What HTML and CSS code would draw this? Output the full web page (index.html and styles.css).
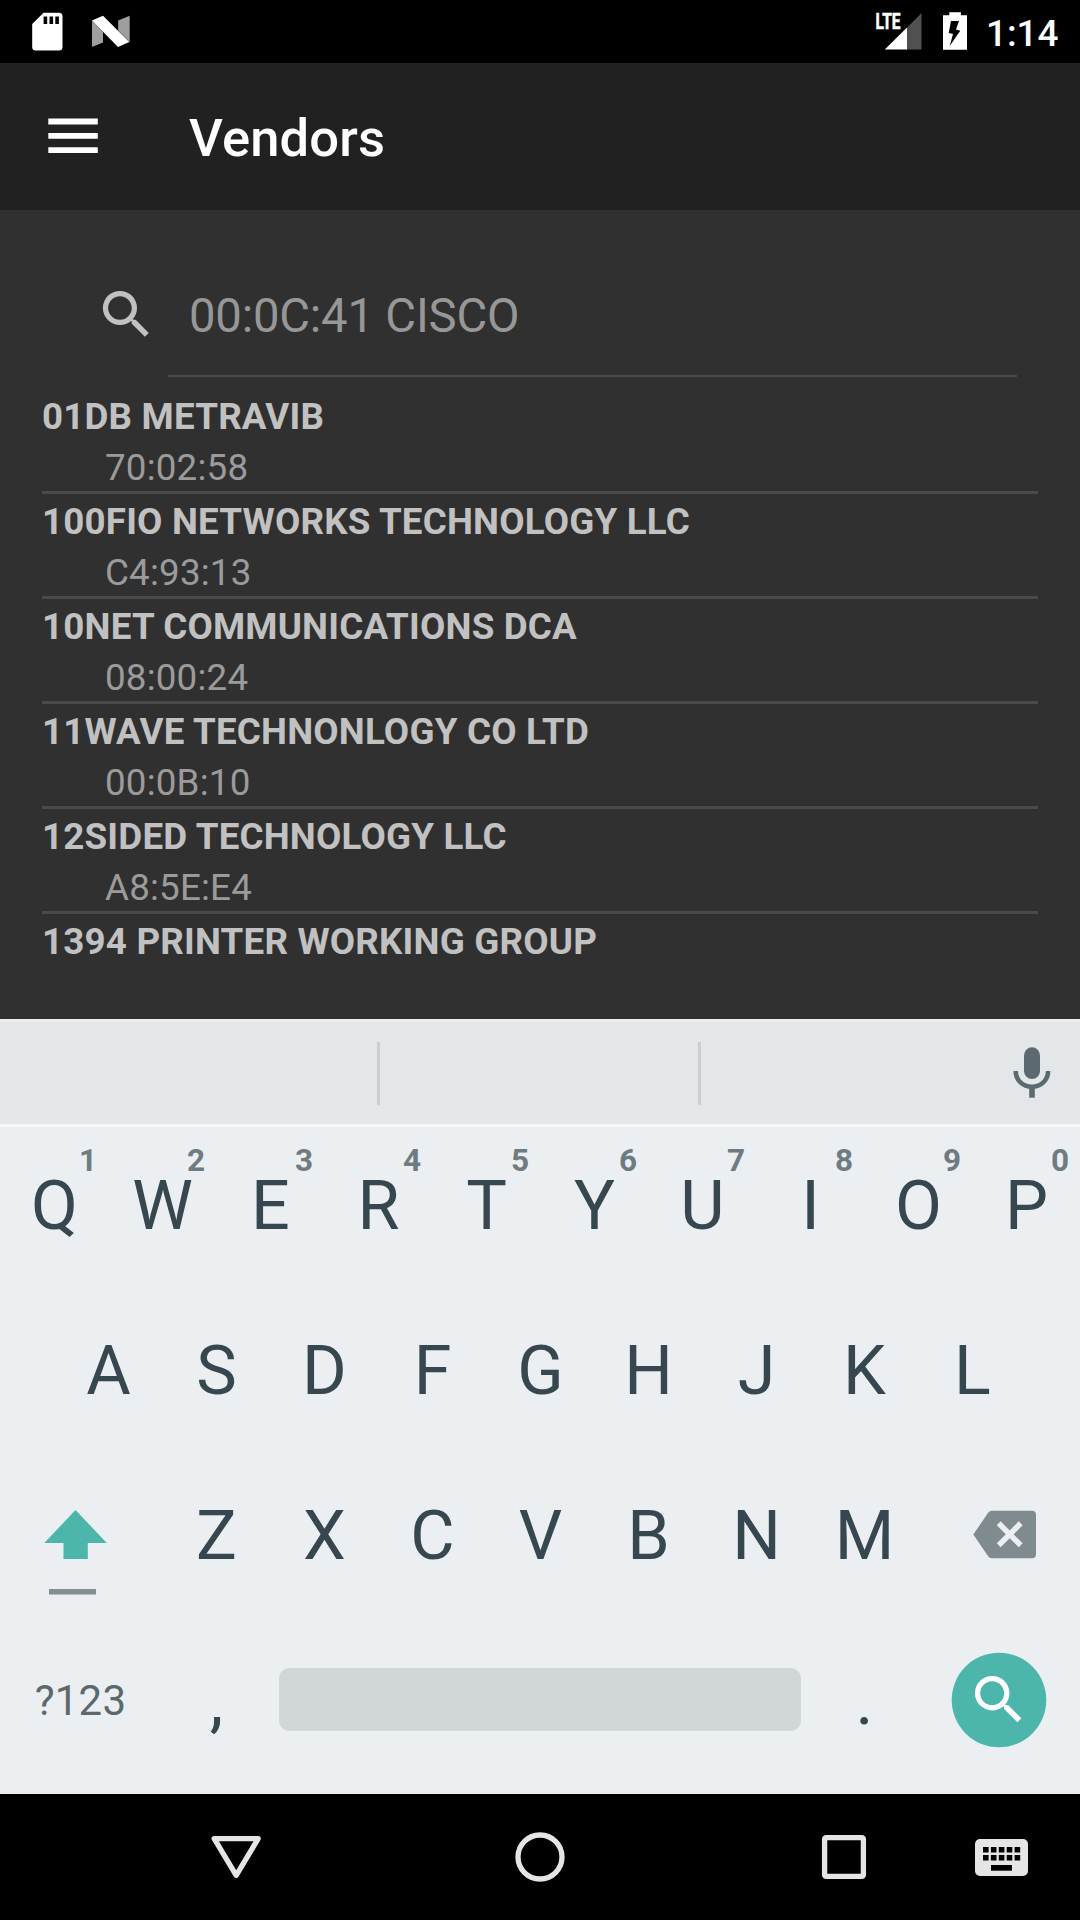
FILE: index.html
```html
<!DOCTYPE html>
<html lang="en">
<head>
<meta charset="utf-8">
<title>Vendors</title>
<link rel="stylesheet" href="styles.css">
</head>
<body>
<div class="screen">
  <header class="status">
    <svg width="140" height="63" viewBox="0 0 140 63">
      <path fill="#fff" fill-rule="evenodd" d="M43.5 12.7H59a3.5 3.5 0 0 1 3.5 3.5V47a3.5 3.5 0 0 1-3.5 3.5H35.700a3.500 3.500 0 0 1-3.500-3.500V24zM43.600 16.500v7.500h3.600v-7.500zM49.500 16.500v7.500h3.600v-7.500zM55.300 16.500v7.500h3.600v-7.500z"/>
      <path fill="#9e9e9e" d="M92 20.500l11 11.500v10.500L92 47zM118.200 20.400l11.500-4.600V42l-11.500-11.500z"/>
      <path fill="#fff" d="M92 20.500l11-4.800L129.300 42 118 47z"/>
    </svg>
    <div class="status-right">
      <svg width="110" height="63" viewBox="870 0 110 63">
        <text class="lte" x="875.500" y="29" textLength="25" lengthAdjust="spacingAndGlyphs">LTE</text>
        <path fill="#505050" d="M907 27.700L921.500 13v36.500H907z"/>
        <path fill="#fff" d="M884.800 49.500L907 27.500v22z"/>
        <path fill="#fff" fill-rule="evenodd" d="M949.300 12.300h11.600v3H967v34.500h-24V15.300h6.300zM951 21l-2.300 12 4.300 1-3.300 12L960.300 30.700l-4.300-1.300L959 21z"/>
      </svg>
      <span class="clock">1:14</span>
    </div>
  </header>

  <div class="appbar">
    <svg width="50" height="36" viewBox="0 0 50 36" fill="#fff">
      <path d="M.3.500h49.500v6H.3zM.3 15h49.500v5.700H.3zM.3 29.200h49.500v5.800H.3z"/>
    </svg>
    <h1 class="title">Vendors</h1>
  </div>

  <main class="content">
    <div class="search">
      <svg class="search-icon" width="63" height="63" viewBox="0 0 24 24" fill="#c1c1c1">
        <path d="M15.500 14h-.790l-.280-.270A6.471 6.471 0 0 0 16 9.500 6.500 6.500 0 1 0 9.500 16c1.610 0 3.090-.590 4.230-1.570l.270.280v.790l5 4.990L20.490 19l-4.990-5zm-6 0C7.010 14 5 11.990 5 9.500S7.010 5 9.500 5 14 7.010 14 9.500 11.990 14 9.500 14z"/>
      </svg>
      <div class="field">00:0C:41 CISCO</div>
    </div>
    <ul class="list">
      <li class="row"><b class="name">01DB METRAVIB</b><span class="mac">70:02:58</span></li>
      <li class="row"><b class="name">100FIO NETWORKS TECHNOLOGY LLC</b><span class="mac">C4:93:13</span></li>
      <li class="row"><b class="name">10NET COMMUNICATIONS DCA</b><span class="mac">08:00:24</span></li>
      <li class="row"><b class="name">11WAVE TECHNONLOGY CO LTD</b><span class="mac">00:0B:10</span></li>
      <li class="row"><b class="name">12SIDED TECHNOLOGY LLC</b><span class="mac">A8:5E:E4</span></li>
      <li class="row"><b class="name">1394 PRINTER WORKING GROUP</b></li>
    </ul>
  </main>

  <section class="keyboard">
    <div class="suggest">
      <div class="slot slot-first"></div>
      <div class="slot slot-mid"></div>
      <svg class="mic" width="38" height="52" viewBox="1013 1047 38 52">
        <rect x="1024" y="1047.300" width="16" height="31.700" rx="8" fill="#5c6a70"/>
        <path d="M1015.700 1071c0 9.300 7.300 15.800 16.200 15.800s16.200-6.500 16.200-15.800" fill="none" stroke="#5c6a70" stroke-width="4.600"/>
        <path d="M1029.200 1087h5.600v10.700h-5.600z" fill="#5c6a70"/>
      </svg>
    </div>
    <div class="keys">
      <div class="key">Q<sup class="hint">1</sup></div>
      <div class="key">W<sup class="hint">2</sup></div>
      <div class="key">E<sup class="hint">3</sup></div>
      <div class="key">R<sup class="hint">4</sup></div>
      <div class="key">T<sup class="hint">5</sup></div>
      <div class="key">Y<sup class="hint">6</sup></div>
      <div class="key">U<sup class="hint">7</sup></div>
      <div class="key">I<sup class="hint">8</sup></div>
      <div class="key">O<sup class="hint">9</sup></div>
      <div class="key">P<sup class="hint">0</sup></div>
    </div>
    <div class="keys">
      <div class="key">A</div>
      <div class="key">S</div>
      <div class="key">D</div>
      <div class="key">F</div>
      <div class="key">G</div>
      <div class="key">H</div>
      <div class="key">J</div>
      <div class="key">K</div>
      <div class="key">L</div>
    </div>
    <div class="keys">
      <svg width="162" height="165" viewBox="0 0 162 165">
        <path fill="#4db6ac" d="M75.500 53l31.300 33H87.800v16H63.500V86H44.300z"/>
        <path fill="#838d92" d="M49 132h47v5.500H49z"/>
      </svg>
      <div class="key">Z</div>
      <div class="key">X</div>
      <div class="key">C</div>
      <div class="key">V</div>
      <div class="key">B</div>
      <div class="key">N</div>
      <div class="key">M</div>
      <svg width="162" height="165" viewBox="0 0 162 165">
        <path fill="#808b90" d="M73.500 53.800H114a4 4 0 0 1 4 4v39.500a4 4 0 0 1-4 4H73.500q-2 0-3.200-1.800L55.300 77.500 70.300 55.600q1.200-1.800 3.200-1.800z"/>
        <path stroke="#eceff1" stroke-width="5.500" d="M80.700 66.300l22 22M102.700 66.300l-22 22"/>
      </svg>
    </div>
    <div class="keys">
      <div class="sym">?123</div>
      <div class="key">,</div>
      <div class="space-cell"><div class="space"></div></div>
      <div class="key">.</div>
      <svg width="162" height="165" viewBox="0 0 162 165">
        <circle cx="81" cy="78" r="47.300" fill="#4db6ac"/>
        <path transform="translate(49 46) scale(2.650)" fill="#fff" d="M15.500 14h-.790l-.280-.270A6.471 6.471 0 0 0 16 9.500 6.500 6.500 0 1 0 9.500 16c1.610 0 3.090-.590 4.230-1.570l.270.280v.790l5 4.990L20.490 19l-4.990-5zm-6 0C7.010 14 5 11.990 5 9.500S7.010 5 9.500 5 14 7.010 14 9.500 11.990 14 9.500 14z"/>
      </svg>
    </div>
  </section>

  <nav class="navbar">
    <svg width="1080" height="126" viewBox="0 1794 1080 126">
      <g fill="none" stroke="#e5e5e5" stroke-width="5.300" stroke-linejoin="round">
        <path d="M214.200 1838.600h44L236.200 1875.300z"/>
        <circle cx="540" cy="1857" r="22"/>
        <rect x="824.600" y="1837.600" width="38.800" height="38.800" rx="1.500"/>
      </g>
      <rect x="975" y="1839" width="53" height="37" rx="5" fill="#e5e5e5"/>
      <path stroke="#000" stroke-width="5.500" stroke-dasharray="5.600 2.300" d="M983 1849.700h38M983 1857.700h38"/>
      <path fill="#000" d="M991 1865h21v5.700h-21z"/>
    </svg>
  </nav>
</div>
</body>
</html>
```
FILE: styles.css
```css
* { box-sizing: border-box; }

body {
  margin: 0;
  background: #000;
  font-family: Roboto, "Liberation Sans", sans-serif;
}

.screen {
  display: flex;
  flex-direction: column;
  width: 1080px;
  height: 1920px;
  overflow: hidden;
  background: #303030;
}

svg { display: block; flex: none; }

.status {
  display: flex;
  justify-content: space-between;
  height: 63px;
  background: #000;
  color: #fff;
}

.status-right { display: flex; padding-right: 20px; }

.lte {
  font-size: 21.800px;
  font-weight: 700;
  fill: #fff;
  stroke: #fff;
  stroke-width: .6px;
}

.clock {
  width: 80px;
  padding-left: 6px;
  font-size: 36.750px;
  font-weight: 500;
  line-height: 43px;
  padding-top: 12px;
}

.appbar {
  display: flex;
  height: 147px;
  padding: 55px 48px 0;
  background: #212121;
}

.title {
  margin: -11px 0 0 91px;
  color: #fff;
  font-size: 52.500px;
  font-weight: 500;
  line-height: 62px;
  letter-spacing: .15px;
}

.content {
  display: flex;
  flex-direction: column;
  height: 809px;
  padding: 52px 42px 0;
  overflow: hidden;
}

.search {
  display: flex;
  height: 115px;
  padding: 0 21px 0 53px;
}

.search-icon { margin-top: 21px; }

.field {
  flex: 1;
  margin-left: 10px;
  padding: 26px 0 0 21px;
  border-bottom: 2px solid #4a4a4a;
  color: #979797;
  font-size: 47.250px;
  line-height: 56px;
  letter-spacing: -.2px;
}

.list {
  margin: 0;
  padding: 12px 0 0;
  list-style: none;
}

.row {
  display: flex;
  flex-direction: column;
  height: 105px;
  padding-top: 2px;
  border-bottom: 3px solid #4a4a4a;
  font-size: 36.750px;
  line-height: 51px;
  letter-spacing: .19px;
}

.row:last-child { border-bottom: 0; }

.name { color: #c1c1c1; font-weight: 700; }

.mac { padding-left: 63px; color: #9b9b9b; }

.keyboard {
  height: 775px;
  background: #eceff1;
}

.suggest {
  display: flex;
  height: 108px;
  padding: 20px 29px 0 0;
  border-top: 3px solid #eceff1;
  border-bottom: 3px solid #f5f7f8;
  background: #e3e7e9;
}

.slot { height: 63px; border-right: 3px solid #cbcfd1; }
.slot-first { width: 380px; }
.slot-mid { width: 321px; }
.mic { margin: 5px 0 0 auto; }

.keys {
  display: flex;
  justify-content: center;
  height: 165px;
}

.key {
  position: relative;
  width: 108px;
  padding: 39px 0 0 1px;
  color: #37474f;
  font-size: 68.250px;
  line-height: 81px;
  text-align: center;
}

.hint {
  position: absolute;
  top: 15px;
  left: 68px;
  width: 40px;
  color: #6e7b81;
  font-size: 31.500px;
  font-weight: 700;
  line-height: 37px;
}

.sym {
  width: 162px;
  padding: 54px 1px 0 0;
  color: #5b696f;
  font-size: 42px;
  line-height: 49px;
  letter-spacing: .2px;
  text-align: center;
}

.space-cell { width: 540px; padding: 46px 9px 0; }

.space {
  height: 63px;
  border-radius: 10px;
  background: #d1d6d9;
}

.navbar { height: 126px; background: #000; }
```
